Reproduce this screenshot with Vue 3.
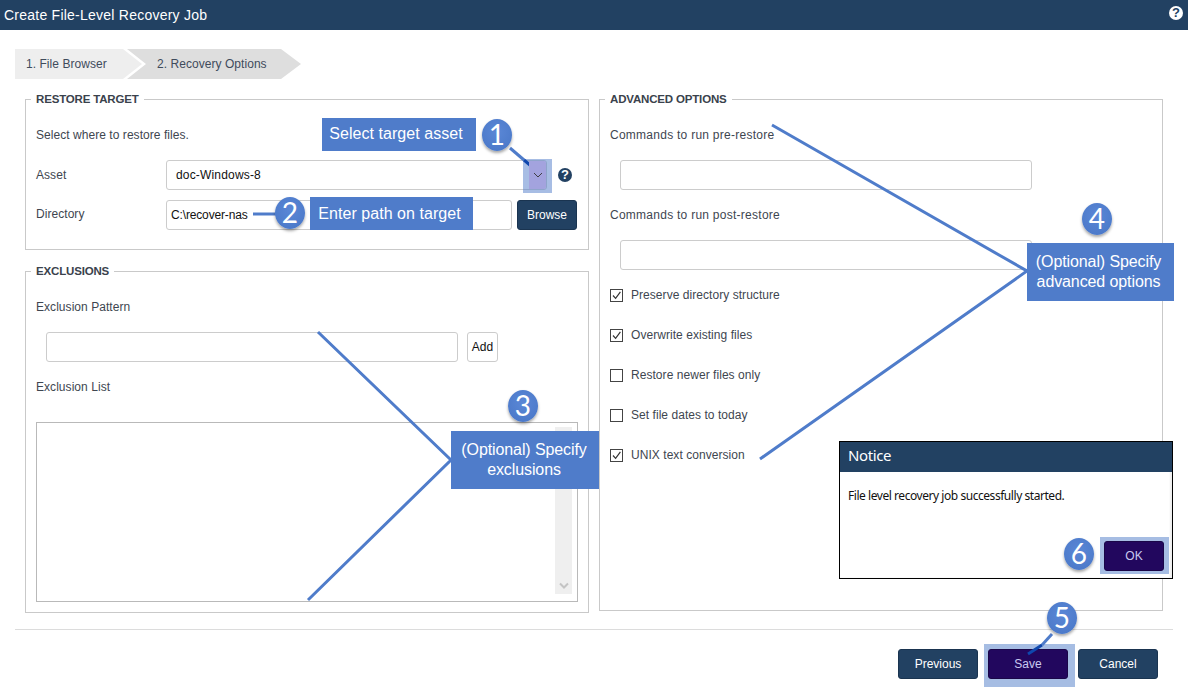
<script setup>
const checks = [
  { label: 'Preserve directory structure', on: true },
  { label: 'Overwrite existing files', on: true },
  { label: 'Restore newer files only', on: false },
  { label: 'Set file dates to today', on: false },
  { label: 'UNIX text conversion', on: true },
]
</script>

<template>
  <div class="page">
    <header class="topbar">
      <h1>Create File-Level Recovery Job</h1>
      <span class="help help-light">?</span>
    </header>

    <nav class="steps">
      <div class="step step-one">1. File Browser</div>
      <div class="step step-two">2. Recovery Options</div>
    </nav>

    <main class="columns">
      <div class="col">
        <fieldset class="panel target">
          <legend>RESTORE TARGET</legend>
          <div class="line low">Select where to restore files.</div>
          <div class="row first">
            <label class="field-name">Asset</label>
            <div class="select">
              <span class="select-value">doc-Windows-8</span>
              <span class="select-btn">
                <svg width="10" height="6" viewBox="0 0 10 6"><path d="M1 1l4 4 4-4" fill="none" stroke="#333" stroke-width="0.9" /></svg>
              </span>
            </div>
            <span class="help help-dark">?</span>
          </div>
          <div class="row second">
            <label class="field-name raise">Directory</label>
            <input class="input dir" value="C:\recover-nas" />
            <button class="btn browse">Browse</button>
          </div>
        </fieldset>

        <fieldset class="panel exclusions">
          <legend>EXCLUSIONS</legend>
          <div class="line">Exclusion Pattern</div>
          <div class="pattern">
            <input class="input wide" />
            <button class="add">Add</button>
          </div>
          <div class="line list-label">Exclusion List</div>
          <div class="list">
            <div class="track">
              <svg width="10" height="8" viewBox="0 0 10 8"><path d="M1 1.5l4 4 4-4" fill="none" stroke="#c4c4c4" stroke-width="2" /></svg>
            </div>
          </div>
        </fieldset>
      </div>

      <fieldset class="panel advanced">
        <legend>ADVANCED OPTIONS</legend>
        <div class="line low spaced">Commands to run pre-restore</div>
        <input class="input wide cmd" />
        <div class="line low spaced cmd-label">Commands to run post-restore</div>
        <input class="input wide cmd" />
        <ul class="checks">
          <li v-for="c in checks" :key="c.label">
            <span class="box">
              <svg v-if="c.on" width="11" height="11" viewBox="0 0 11 11"><path d="M2 5.5l2.6 2.8L9.4 1.8" fill="none" stroke="#333" stroke-width="1.2" /></svg>
            </span>
            {{ c.label }}
          </li>
        </ul>
      </fieldset>
    </main>

    <footer class="footer">
      <span class="save-glow"></span>
      <button class="btn action">Previous</button>
      <button class="btn action save">Save</button>
      <button class="btn action">Cancel</button>
    </footer>

    <section class="notice">
      <div class="notice-title">Notice</div>
      <p>File level recovery job successfully started.</p>
      <span class="ok-glow"></span>
      <button class="btn ok">OK</button>
    </section>

    <div class="asset-glow"></div>

    <svg class="leaders" width="1188" height="692" viewBox="0 0 1188 692">
      <g stroke="#4f7cca" stroke-width="3" fill="none">
        <path d="M253 214H278" />
        <path d="M318 332L451 460L308 600" />
        <path d="M772 125L1027 271L760 459" />
      </g>
      <path d="M510 148L524 160" stroke="#4f7cca" stroke-width="3" />
      <path d="M524 160L537 171" stroke="#0f47ad" stroke-width="3" />
      <path d="M1052 634L1042 645" stroke="#4f7cca" stroke-width="3" />
      <path d="M1042 645L1028 654" stroke="#0f47ad" stroke-width="3" />
    </svg>

    <div class="call call-1">Select target asset</div>
    <div class="call call-2">Enter path on target</div>
    <div class="call call-3">(Optional) Specify<br />exclusions</div>
    <div class="call call-4">(Optional) Specify<br />advanced options</div>

    <div class="num num-1">1</div>
    <div class="num num-2">2</div>
    <div class="num num-3">3</div>
    <div class="num num-4">4</div>
    <div class="num num-5">5</div>
    <div class="num num-6">6</div>
  </div>
</template>

<style scoped>
* { box-sizing: border-box; }

.page {
  position: relative;
  width: 1188px;
  height: 692px;
  overflow: hidden;
  font-family: "Liberation Sans", Arial, sans-serif;
  font-size: 12px;
  letter-spacing: 0.05px;
  color: #3e4650;
}

.topbar {
  height: 30px;
  background: #224162;
  color: #fff;
  display: flex;
  align-items: center;
  justify-content: space-between;
  padding: 0 5px 0 4px;
}
.topbar h1 {
  margin: 0;
  font-size: 14px;
  font-weight: 400;
  letter-spacing: 0.24px;
}

.help {
  width: 14px;
  height: 14px;
  border-radius: 50%;
  display: flex;
  align-items: center;
  justify-content: center;
  font-weight: 700;
  font-size: 13px;
  line-height: 14px;
}
.help-light {
  background: #fff;
  color: #224162;
  margin-top: -4px;
}
.help-dark {
  background: #224162;
  color: #fff;
  margin-left: 11px;
}

.steps {
  display: flex;
  margin: 19px 0 0 15px;
  height: 30px;
}
.step {
  height: 30px;
  line-height: 31px;
  color: #3f4b5c;
}
.step-one {
  width: 127px;
  padding-left: 11px;
  background: #eeeeee;
  clip-path: polygon(0 0, 108px 0, 127px 15px, 108px 30px, 0 30px);
}
.step-two {
  width: 174px;
  margin-left: -15px;
  padding-left: 30px;
  background: #dedede;
  clip-path: polygon(0 0, 154px 0, 174px 15px, 154px 30px, 0 30px, 19px 15px);
}

.columns {
  display: flex;
  align-items: flex-start;
  gap: 10px;
  margin: 13px 0 0 25px;
}
.col {
  display: flex;
  flex-direction: column;
  gap: 14px;
  width: 564px;
}

.panel {
  margin: 0;
  min-width: 0;
  width: 564px;
  padding: 18px 10px 0;
  border: 1px solid #c9c9c9;
}
.panel legend {
  margin-left: -5px;
  padding: 0 5px;
  height: 14px;
  font-weight: 700;
  font-size: 11.5px;
  letter-spacing: -0.17px;
  line-height: 14px;
  color: #3a424c;
}
.target { height: 158px; }
.exclusions { height: 349px; padding-top: 19px; }
.advanced { height: 519px; }

.line {
  height: 20px;
  line-height: 20px;
}
.low { line-height: 22px; }
.spaced { letter-spacing: 0.26px; }

.row {
  display: flex;
  align-items: center;
  height: 30px;
}
.row.first { margin-top: 16px; }
.row.second { margin-top: 10px; }
.field-name { width: 130px; }
.raise { margin-top: -2px; }

.select {
  position: relative;
  width: 381px;
  height: 30px;
  padding-left: 9px;
  border: 1px solid #ccc;
  border-radius: 3px;
  display: flex;
  align-items: center;
  color: #111;
}
.select-value { letter-spacing: 0.17px; }
.select-btn {
  position: absolute;
  top: 0;
  right: 0;
  width: 17px;
  height: 28px;
  background: #a3a3de;
  border-radius: 0 2px 2px 0;
  display: flex;
  align-items: center;
  justify-content: center;
  z-index: 2;
}

.input {
  height: 30px;
  border: 1px solid #ccc;
  border-radius: 3px;
  background: #fff;
  padding: 0 4px;
  font: 12px "Liberation Sans", Arial, sans-serif;
  color: #111;
  outline: none;
}
.dir { width: 346px; letter-spacing: -0.15px; }
.wide { width: 412px; display: block; }

.btn {
  height: 30px;
  border: 1px solid #1a3450;
  border-radius: 3px;
  background: #224162;
  color: #fff;
  font: 12px "Liberation Sans", Arial, sans-serif;
  padding: 0;
}
.browse { width: 60px; margin-left: 5px; }

.pattern {
  display: flex;
  margin: 15px 0 0 10px;
}
.add {
  width: 31px;
  height: 30px;
  margin-left: 9px;
  padding: 0;
  border: 1px solid #ccc;
  border-radius: 3px;
  background: #fff;
  color: #111;
  font: 12px "Liberation Sans", Arial, sans-serif;
}
.list-label { margin-top: 15px; }
.list {
  position: relative;
  width: 542px;
  height: 180px;
  margin-top: 25px;
  border: 1px solid #b9b9b9;
}
.track {
  position: absolute;
  top: 4px;
  right: 5px;
  width: 17px;
  height: 167px;
  background: #efefef;
  display: flex;
  align-items: flex-end;
  justify-content: center;
  padding-bottom: 4px;
}

.advanced .cmd { margin: 16px 0 0 10px; }
.cmd-label { margin-top: 14px; }
.checks {
  list-style: none;
  margin: 15px 0 0;
  padding: 0;
  display: flex;
  flex-direction: column;
  gap: 20px;
}
.checks li {
  height: 20px;
  display: flex;
  align-items: center;
  gap: 8px;
}
.box {
  width: 13px;
  height: 13px;
  border: 1px solid #444;
  display: flex;
  align-items: center;
  justify-content: center;
  background: #fff;
}

.footer {
  position: relative;
  margin: 16px 15px 0;
  width: 1158px;
  height: 51px;
  border-top: 1px solid #dcdcdc;
  display: flex;
  justify-content: flex-end;
  gap: 10px;
  padding: 19px 15px 0 0;
}
.action {
  position: relative;
  width: 80px;
  height: 30px;
}
.save { background: #22075e; border-color: #1a0648; color: #c9c9f0; }
.save-glow {
  position: absolute;
  left: 969px;
  top: 14px;
  width: 91px;
  height: 43px;
  background: #a6bde3;
}

.notice {
  position: absolute;
  left: 839px;
  top: 441px;
  width: 334px;
  height: 138px;
  border: 1px solid #000;
  background: #fff;
  box-shadow: inset -2px 0 2px #eee;
  color: #111;
}
.notice-title {
  height: 30px;
  padding-left: 8px;
  background: #224162;
  color: #fff;
  font: 15px/27px "Noto Sans", sans-serif;
  letter-spacing: -0.4px;
}
.notice p {
  margin: 15px 0 0 8px;
  font: 12px/17px "Noto Sans", sans-serif;
  letter-spacing: -0.45px;
}
.ok-glow {
  position: absolute;
  left: 260px;
  top: 95px;
  width: 69px;
  height: 37px;
  background: #a6bde3;
}
.ok {
  position: absolute;
  left: 264px;
  top: 99px;
  width: 60px;
  background: #22075e;
  border-color: #1a0648;
  color: #c9c9f0;
}

.asset-glow {
  position: absolute;
  left: 523px;
  top: 159px;
  width: 29px;
  height: 34px;
  background: rgba(79, 124, 202, 0.5);
}
.leaders {
  position: absolute;
  left: 0;
  top: 0;
  pointer-events: none;
}

.call {
  position: absolute;
  background: #4f7cca;
  color: #fff;
  font-size: 16px;
  line-height: 20px;
  text-align: center;
  display: flex;
  align-items: center;
  justify-content: center;
}
.call-1 { left: 322px; top: 118px; width: 154px; height: 33px; padding: 0 6px 2px 0; }
.call-2 { left: 310px; top: 197px; width: 163px; height: 33px; padding: 0 4px 0 0; }
.call-3 { left: 451px; top: 431px; width: 148px; height: 58px; padding: 0 2px 0 0; letter-spacing: -0.1px; }
.call-4 { left: 1027px; top: 243px; width: 147px; height: 58px; padding: 0 4px 0 0; letter-spacing: -0.1px; }

.num {
  position: absolute;
  width: 30px;
  height: 32px;
  border-radius: 50%;
  background: radial-gradient(circle at 50% 40%, #5a87d6, #4876c6);
  color: #fff;
  font-family: Lato, sans-serif;
  font-size: 28px;
  line-height: 31px;
  text-align: center;
  box-shadow: 0 2px 3px rgba(0, 0, 0, 0.35);
}
.num-1 { left: 482px; top: 119px; }
.num-2 { left: 275px; top: 197px; }
.num-3 { left: 508px; top: 390px; }
.num-4 { left: 1082px; top: 203px; }
.num-5 { left: 1047px; top: 602px; }
.num-6 { left: 1064px; top: 538px; }
</style>
